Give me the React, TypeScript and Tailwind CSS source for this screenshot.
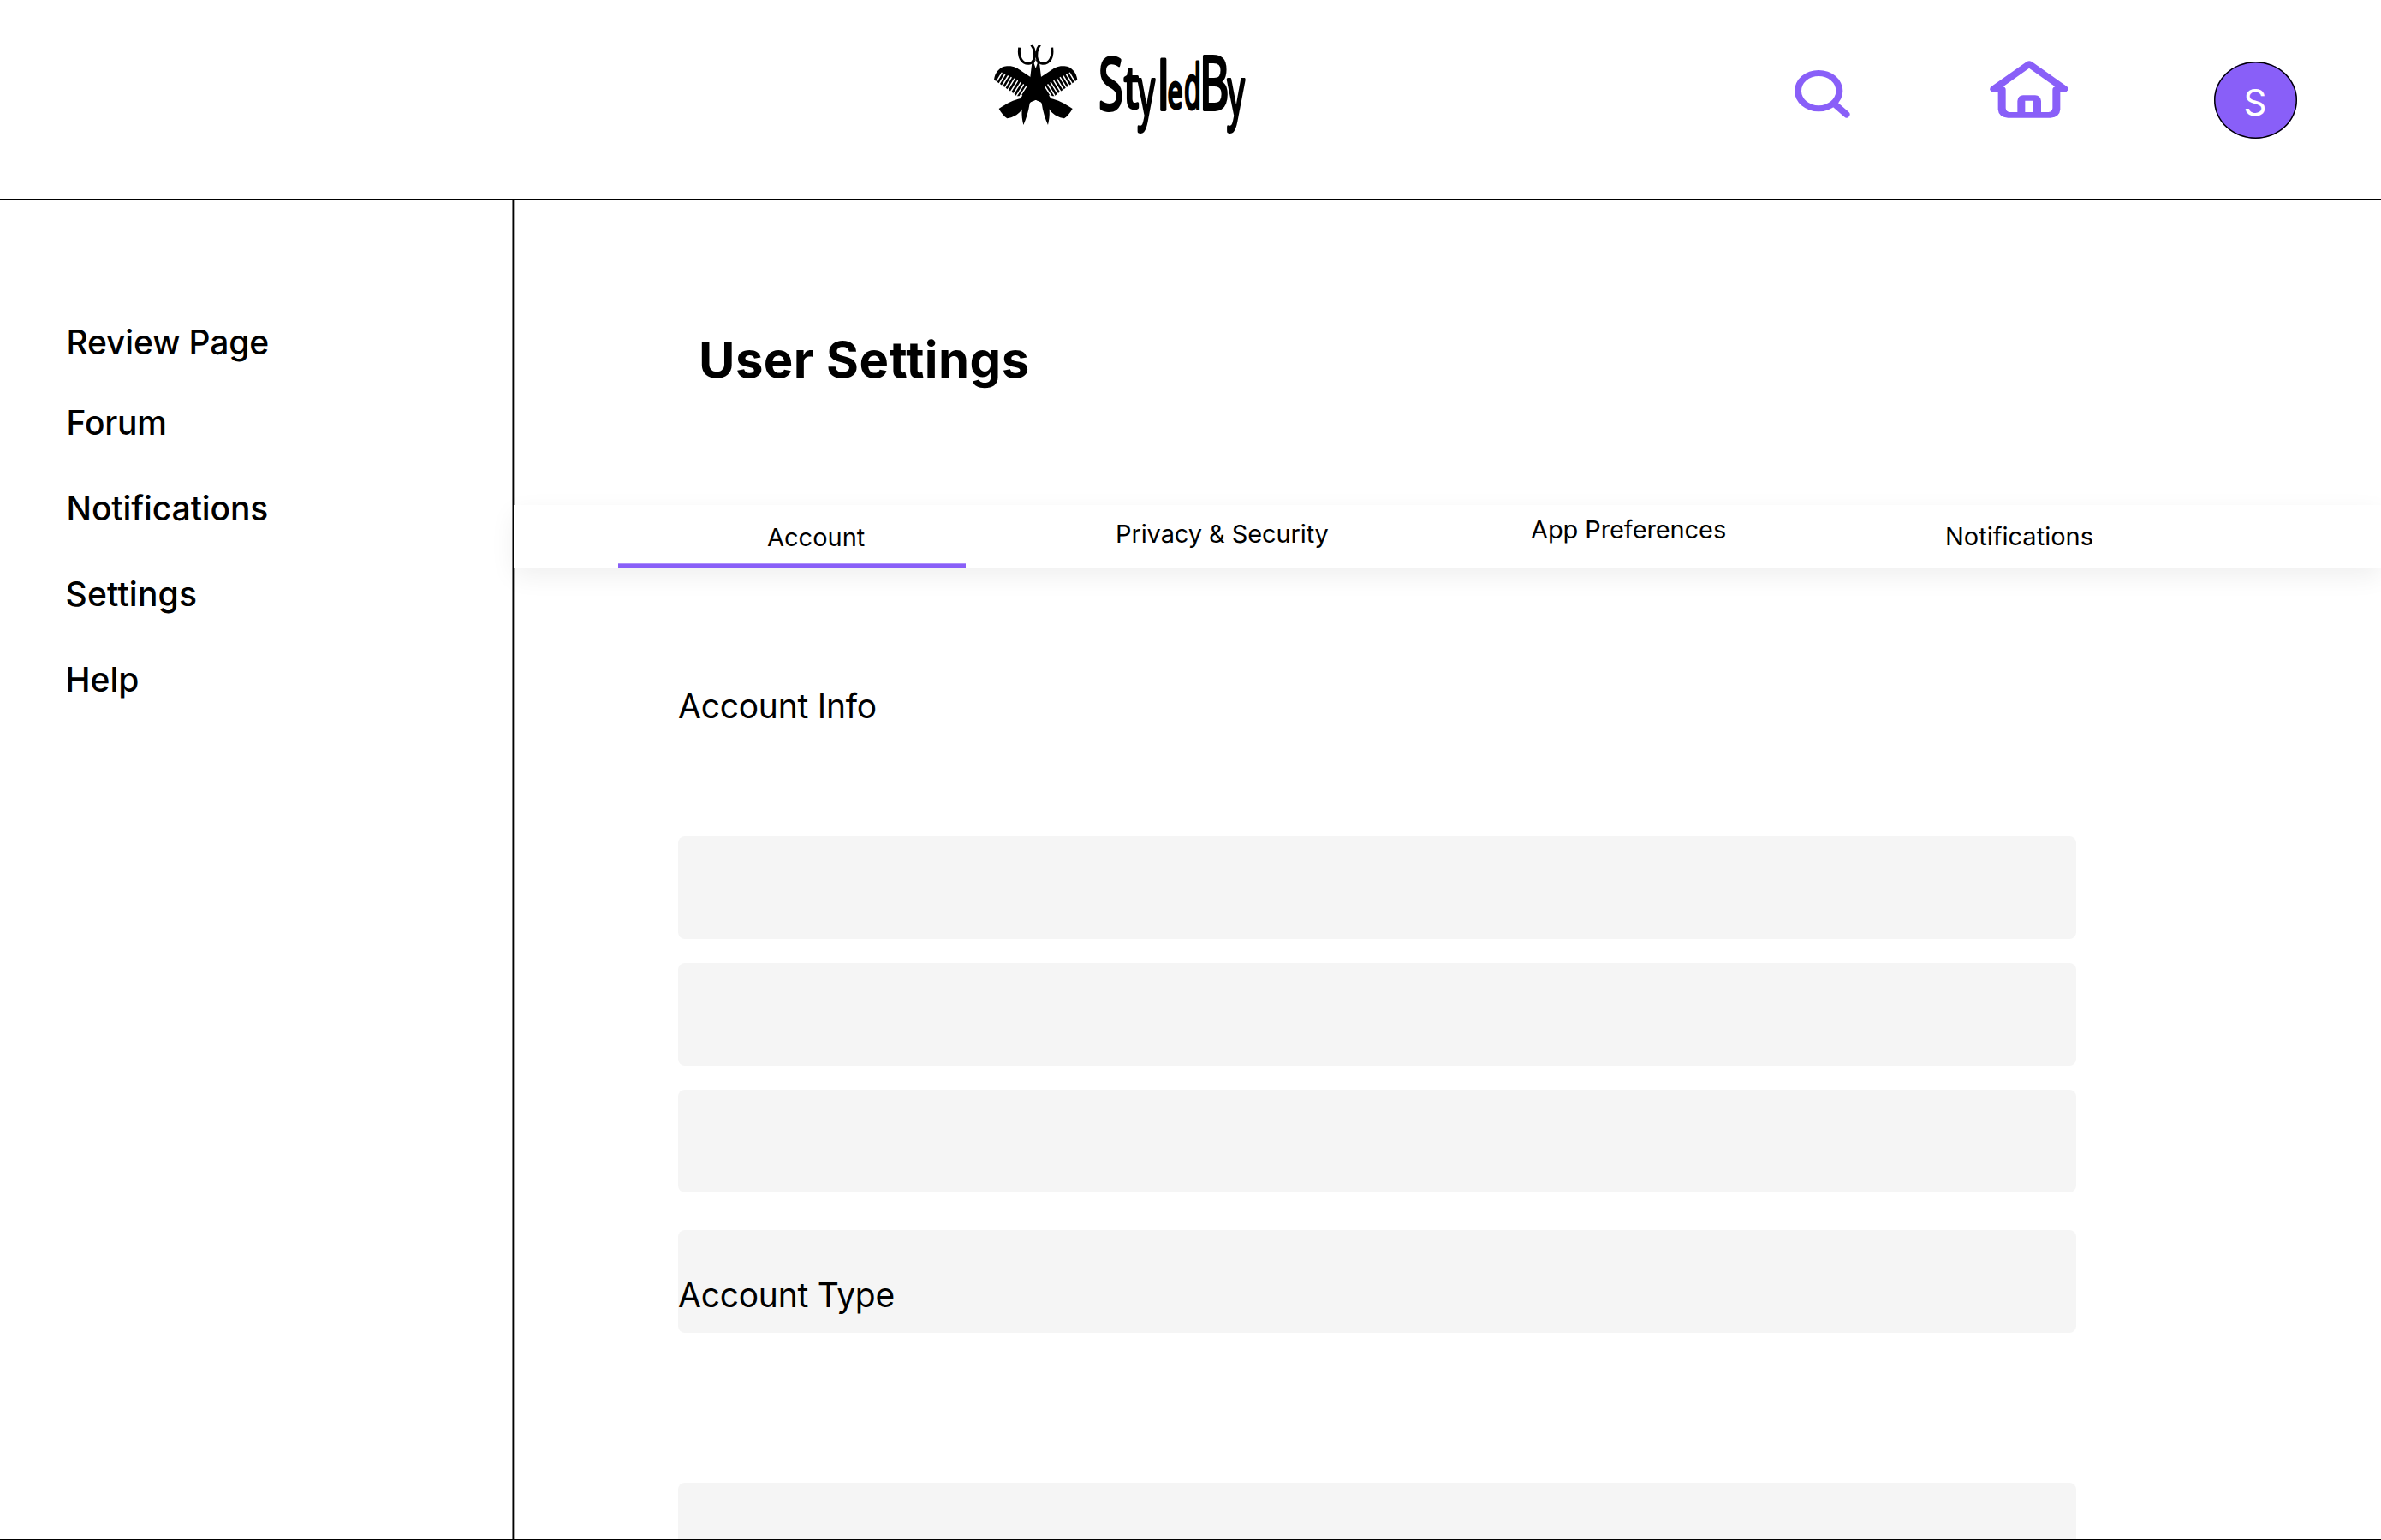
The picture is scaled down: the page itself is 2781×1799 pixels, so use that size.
import React from "react";

const navItems = [
  { label: "Review Page", cls: "mt-[142px] ml-[77.500px] tracking-[-0.150px]" },
  { label: "Forum", cls: "mt-[46px] ml-[77.500px] tracking-[-0.200px]" },
  { label: "Notifications", cls: "mt-[52px] ml-[77.500px] tracking-[-0.100px]" },
  { label: "Settings", cls: "mt-[52px] ml-[76.500px] tracking-[0.200px]" },
  { label: "Help", cls: "mt-[52px] ml-[76.500px]" },
];

const wordmark = [
  { ch: "S", x: 430, y: 294, sx: 0.62, size: 252 },
  { ch: "t", x: 519, y: 289, sx: 0.7, size: 203 },
  { ch: "y", x: 568, y: 316, sx: 0.5, size: 234 },
  { ch: "l", x: 636, y: 294, sx: 0.7, size: 230 },
  { ch: "e", x: 671, y: 289, sx: 0.57, size: 164 },
  { ch: "d", x: 729, y: 290, sx: 0.46, size: 212 },
  { ch: "B", x: 783, y: 294, sx: 0.625, size: 256 },
  { ch: "y", x: 881, y: 316, sx: 0.51, size: 234 },
];

function HalfMark() {
  return (
    <>
      {/* comb with its handle crossing to the other side */}
      <path d="M63 190 C66 165 82 144 108 142 C130 140 145 148 160 160 L194 182 L225 196 L262 255 C285 260 310 272 338 291 C330 305 320 318 309 325 C290 322 272 312 262 300 C250 286 244 272 228 266 L209 260 L180 256 L160 243 C150 250 140 247 134 239 Z" fill="#000" />
      <g stroke="#fff" strokeWidth="4.6" strokeLinecap="round">
        <path d="M90 166 L72 196" />
        <path d="M101 171 L82 203" />
        <path d="M112 177 L92 210" />
        <path d="M123 182 L102 217" />
        <path d="M134 187 L112 224" />
        <path d="M145 194 L122 231" />
        <path d="M156 200 L132 238" />
        <path d="M166 207 L143 244" />
        <path d="M175 215 L155 246" />
      </g>
      {/* scissor blade and finger ring */}
      <path d="M228 180 L222 130 L207 118 L196 150 L190 200 L168 262 C160 285 157 312 166 348 C176 325 184 300 188 272 L215 240 Z" fill="#000" />
      <path d="M152 77 C148 108 158 134 185 133 C202 130 208 112 205 92 C203 80 198 72 194 67" fill="none" stroke="#000" strokeWidth="9" />
    </>
  );
}

function Logo() {
  return (
    <svg className="h-[150px] w-[340px]" viewBox="0 0 1020 450">
      <HalfMark />
      <g transform="matrix(-1 0 0 1 418 0)">
        <HalfMark />
      </g>
      <path d="M192 190 H226 L248 240 L226 268 L209 260 L192 268 L170 240 Z" />
      <path d="M209 120 L215 132 L209 150 L203 132 Z" fill="#fff" />
      <g fontFamily="'Open Sans', sans-serif" fontWeight="400" stroke="#000" strokeWidth="12" strokeLinejoin="round">
        {wordmark.map((l, i) => (
          <text key={i} transform={`translate(${l.x} ${l.y}) scale(${l.sx} 1)`} fontSize={l.size}>
            {l.ch}
          </text>
        ))}
      </g>
    </svg>
  );
}

function SearchIcon() {
  return (
    <svg className="h-[56px] w-[65px]" viewBox="107 95 195 168">
      <path
        fill="#895ff8"
        fillRule="evenodd"
        d="M107 167.500 A84.500 72.500 0 0 1 276 167.500 A84.500 72.500 0 0 1 107 167.500 Z M131 167.500 A60.500 51.500 0 0 0 252 167.500 A60.500 51.500 0 0 0 131 167.500 Z"
      />
      <path d="M250 216 L289 250" stroke="#895ff8" strokeWidth="23" strokeLinecap="round" />
    </svg>
  );
}

function HomeIcon() {
  return (
    <svg className="h-[67px] w-[92px]" viewBox="791 62 276 201" fill="#895ff8">
      <path
        fillRule="evenodd"
        d="M921 65 Q929 60 938 65 L1062 153 Q1067 158 1065 165 Q1061 172 1053 172 H1038 V233 Q1036 259 1004 262 H855 Q822 259 820 233 V172 H805 Q796 172 792 165 Q790 158 796 153 Z M929 88 L838 153 Q847 155 847 164 V228 Q848 241 861 242 H888 V203 Q890 184 908 183 H950 Q969 184 971 203 V242 H997 Q1010 241 1011 228 V164 Q1011 155 1020 153 Z M915 202 H943 V242 H915 Z"
      />
    </svg>
  );
}

function Field({ className, children }: { className: string; children?: React.ReactNode }) {
  return <div className={"h-[120px] w-[1632.500px] shrink-0 rounded-[8px] bg-[#f5f5f5] " + className}>{children}</div>;
}

export default function App() {
  return (
    <div className="flex h-[1799px] w-[2781px] flex-col overflow-hidden border-b border-black bg-white font-['Inter',sans-serif] text-black">
      <header className="flex h-[234px] shrink-0 items-start border-b border-black shadow-[inset_0_-1px_0_#bbbbbb]">
        <div className="ml-[1140px] mt-[30px]">
          <Logo />
        </div>
        <div className="ml-[615.500px] mt-[81.500px]">
          <SearchIcon />
        </div>
        <div className="ml-[163px] mt-[70.500px]">
          <HomeIcon />
        </div>
        <div className="ml-[170px] mt-[71.500px] flex h-[90px] w-[97px] justify-center rounded-[50%] bg-[#895ff8] pt-[23px] text-[42px] font-[420] leading-[50px] text-white shadow-[inset_0_0_0_1.500px_#000000]">
          S
        </div>
      </header>

      <div className="flex min-h-0 flex-1">
        <nav className="flex w-[600px] shrink-0 flex-col border-r border-black text-[39px] font-medium leading-[48px] shadow-[inset_-1px_0_0_#777777,1px_0_0_#aaaaaa]">
          {navItems.map((n) => (
            <a key={n.label} className={n.cls}>
              {n.label}
            </a>
          ))}
        </nav>

        <main className="flex min-w-0 flex-1 flex-col">
          <h1 className="ml-[216px] mt-[151px] h-[70px] text-[58px] font-bold leading-[70px] tracking-[0.450px]">User Settings</h1>

          <div className="mt-[135px] flex h-[73px] shrink-0 items-start bg-white text-[29px] font-[370] leading-[36px] shadow-[0_10px_30px_rgba(0,0,0,0.065)]">
            <div className="ml-[122px] flex h-[73px] w-[406px] flex-col justify-between">
              <span className="ml-[174px] mt-[20px]">Account</span>
              <div className="h-[5px] border-t border-[#ac8ffa] bg-[#895ff8]" />
            </div>
            <span className="ml-[175px] mt-[16px] w-[485px] tracking-[-0.100px]">Privacy &amp; Security</span>
            <span className="mt-[11px] w-[484px] tracking-[-0.100px]">App Preferences</span>
            <span className="mt-[19px]">Notifications</span>
          </div>

          <section className="ml-[192px] flex flex-col text-[39px] font-[370] leading-[48px] tracking-[-0.250px]">
            <h2 className="mt-[138px] h-[48px]">Account Info</h2>
            <Field className="mt-[128px]" />
            <Field className="mt-[28px]" />
            <Field className="mt-[28px]" />
            <Field className="mt-[44px] pt-[52px]">Account Type</Field>
            <Field className="mt-[175px]" />
          </section>
        </main>
      </div>
    </div>
  );
}
